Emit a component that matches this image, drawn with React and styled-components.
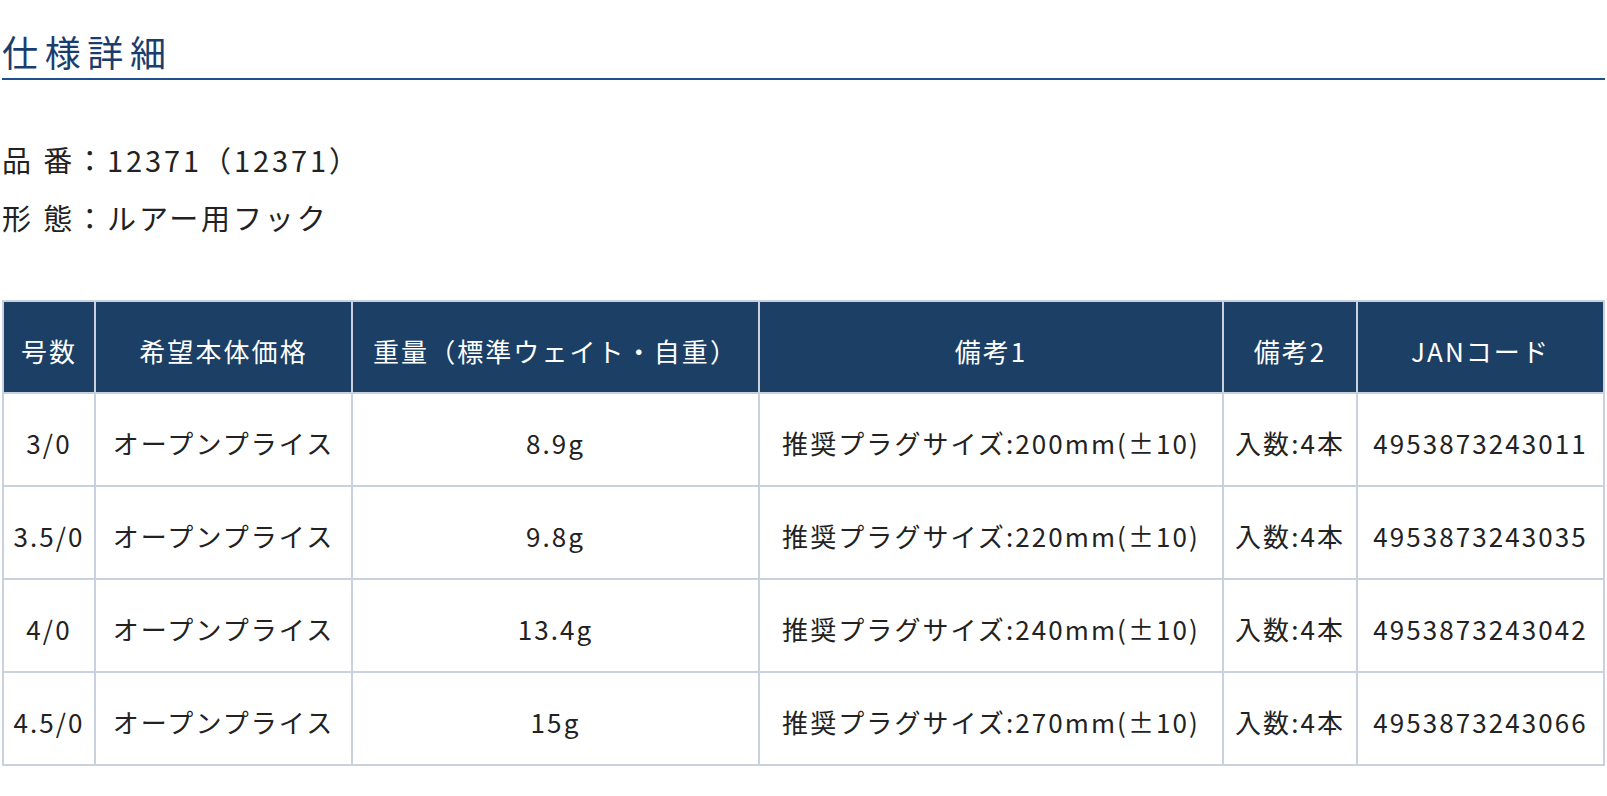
import styled, { createGlobalStyle } from 'styled-components';

const GlobalStyle = createGlobalStyle`
    body {
        margin: 0;
        background: #fff;
        font-family: "Noto Sans CJK JP", "Noto Sans", sans-serif;
        color: #222;
    }
`

const specs = [
    { size: '3/0', price: 'オープンプライス', weight: '8.9g', note1: '推奨プラグサイズ:200mm(±10)', note2: '入数:4本', jan: '4953873243011' },
    { size: '3.5/0', price: 'オープンプライス', weight: '9.8g', note1: '推奨プラグサイズ:220mm(±10)', note2: '入数:4本', jan: '4953873243035' },
    { size: '4/0', price: 'オープンプライス', weight: '13.4g', note1: '推奨プラグサイズ:240mm(±10)', note2: '入数:4本', jan: '4953873243042' },
    { size: '4.5/0', price: 'オープンプライス', weight: '15g', note1: '推奨プラグサイズ:270mm(±10)', note2: '入数:4本', jan: '4953873243066' },
];

const columns = [
    { label: '号数', width: 92 },
    { label: '希望本体価格', width: 257 },
    { label: '重量（標準ウェイト・自重）', width: 407 },
    { label: '備考1', width: 464 },
    { label: '備考2', width: 134 },
    { label: 'JANコード' },
];

const App = () => {
    return (
        <Wrapper>
            <GlobalStyle />
            <Title>仕様詳細</Title>

            <InfoList>
                <InfoLine>品 番：12371（12371）</InfoLine>
                <InfoLine>形 態：ルアー用フック</InfoLine>
            </InfoList>

            <SpecTable>
                <colgroup>
                    {columns.map((c) => (
                        <col key={c.label} style={c.width ? { width: c.width } : undefined} />
                    ))}
                </colgroup>
                <thead>
                    <tr>
                        {columns.map((c) => (
                            <HeadCell key={c.label}>{c.label}</HeadCell>
                        ))}
                    </tr>
                </thead>
                <tbody>
                    {specs.map((row) => (
                        <tr key={row.jan}>
                            <Cell>{row.size}</Cell>
                            <Cell>{row.price}</Cell>
                            <Cell>{row.weight}</Cell>
                            <Cell>{row.note1}</Cell>
                            <Cell>{row.note2}</Cell>
                            <Cell>{row.jan}</Cell>
                        </tr>
                    ))}
                </tbody>
            </SpecTable>
        </Wrapper>
    )
}

const Wrapper = styled.section`
    padding: 0 2px;
`

const Title = styled.h2`
    margin: 24px 0 0;
    font-size: 36px;
    font-weight: 400;
    line-height: 54px;
    letter-spacing: 0.185em;
    color: #1b3d6e;
    border-bottom: 2px solid #1f4f8f;
`

const InfoList = styled.div`
    margin: 50px 0 54px;
`

const InfoLine = styled.p`
    margin: 0;
    font-size: 29px;
    line-height: 58px;
    letter-spacing: 0.1em;
    color: #222;
`

const SpecTable = styled.table`
    width: 100%;
    table-layout: fixed;
    border-collapse: collapse;
    border: 2px solid #c8d1dd;
    font-size: 26px;
    letter-spacing: 0.08em;
`

const HeadCell = styled.th`
    padding: 33px 2px 25px;
    line-height: 32px;
    font-weight: 400;
    color: #fff;
    background: #1c3f65;
    border: 2px solid #c8d1dd;
    text-align: center;
    white-space: nowrap;
`

const Cell = styled.td`
    padding: 33px 2px 26px;
    line-height: 32px;
    color: #222;
    border: 2px solid #c8d1dd;
    text-align: center;
    white-space: nowrap;
`

export default App
